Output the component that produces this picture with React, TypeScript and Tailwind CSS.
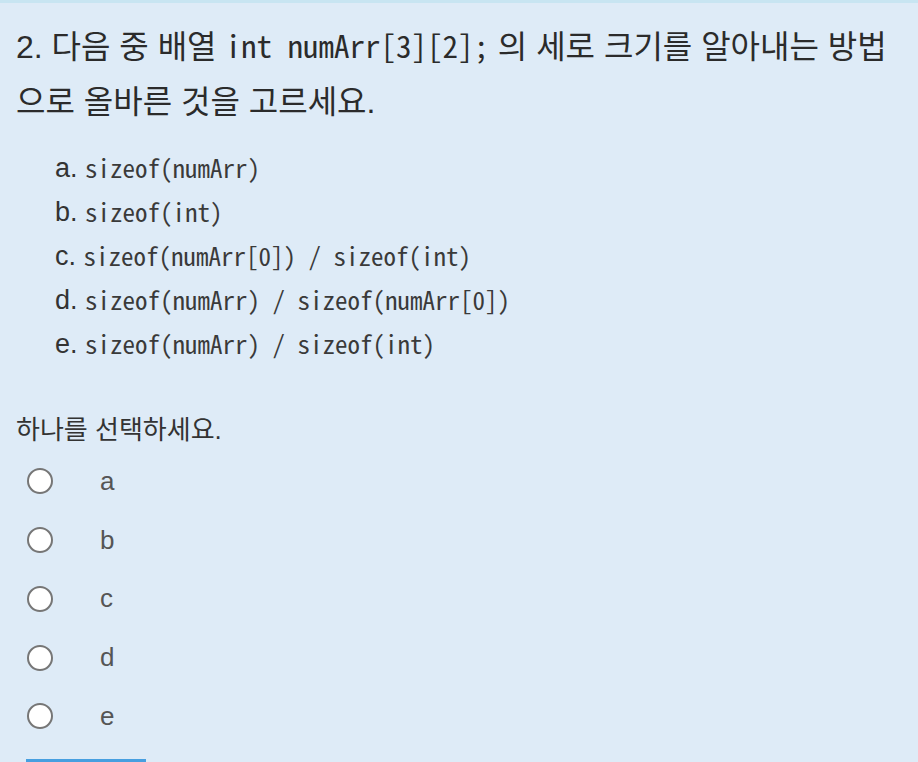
import React from 'react';

const sans = "font-['Liberation_Sans','Noto_Sans_CJK_KR',sans-serif]";
const mono = "font-['Noto_Sans_Mono_CJK_KR','DejaVu_Sans_Mono',monospace]";

const answers = [
  { key: 'a', code: 'sizeof(numArr)' },
  { key: 'b', code: 'sizeof(int)' },
  { key: 'c', code: 'sizeof(numArr[0]) / sizeof(int)' },
  { key: 'd', code: 'sizeof(numArr) / sizeof(numArr[0])' },
  { key: 'e', code: 'sizeof(numArr) / sizeof(int)' },
];

export default function App() {
  return (
    <div className={`w-[918px] h-[762px] overflow-hidden bg-[#deebf7] border-t-[3px] border-[#c8e5f2] text-[#333] ${sans}`}>
      <div className="px-4 pt-[14px]">
        {/* Question text */}
        <p className="text-[32px] leading-[55px] text-[#2b2b2b]">
          2. 다음 중 배열 <code className={`${mono} text-[31px]`}>int numArr[3][2];</code> 의 세로 크기를 알아내는 방법
          <br />
          으로 올바른 것을 고르세요.
        </p>

        {/* Choices */}
        <ol className="mt-[16px] pl-[39px]">
          {answers.map((a) => (
            <li key={a.key} className="h-[44px] flex items-center text-[27px] whitespace-pre">
              <span>{a.key}. </span>
              <span className={`${mono} text-[25px] text-[#3a3a3a]`}>{a.code}</span>
            </li>
          ))}
        </ol>

        {/* Prompt */}
        <div className="mt-[46px] text-[26px] leading-[36px]">하나를 선택하세요.</div>

        {/* Radio answers */}
        <div className="mt-[4px] pl-[11px]">
          {answers.map((a) => (
            <label key={a.key} className="flex items-center h-[58.75px]">
              <span className="w-[26px] h-[26px] rounded-full bg-white border-2 border-[#767676] shrink-0" />
              <span className="ml-[47px] text-[26px] text-[#555]">{a.key}</span>
            </label>
          ))}
        </div>

        <button className="mt-[13px] ml-[10px] w-[120px] h-[44px] bg-[#479fe0]" />
      </div>
    </div>
  );
}
